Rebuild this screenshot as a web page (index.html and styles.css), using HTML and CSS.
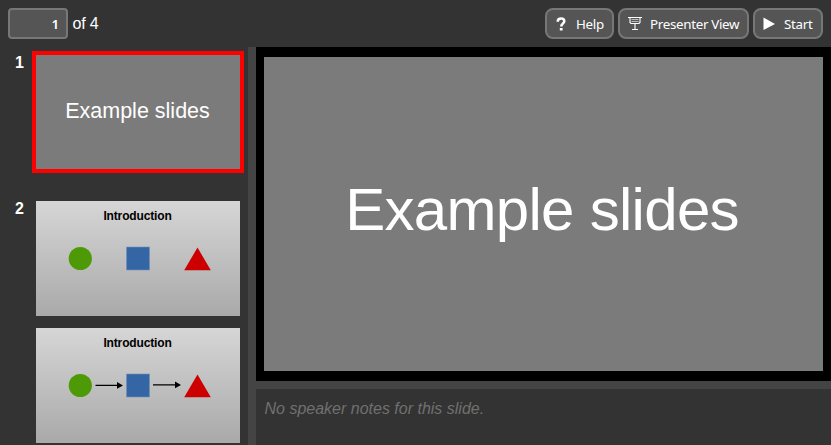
FILE: index.html
```html
<!DOCTYPE html>
<html lang="en">
<head>
<meta charset="utf-8">
<title>Slides</title>
<link rel="stylesheet" href="styles.css">
</head>
<body>
<header class="toolbar">
  <input class="page-input" type="text" value="1" aria-label="Slide">
  <span class="page-total">of 4</span>
  <div class="actions">
    <button class="btn btn-help"><svg class="icon" viewBox="0 0 16 16"><path d="M4.700 5.700C4.700 3.400 6 2.500 8.100 2.500c2.100 0 3.200 1 3.200 2.700C11.300 7.300 8.300 7.500 8.300 10.600" fill="none" stroke="#fff" stroke-width="2.500"/><path d="M6.800 12h2.800v2.500H6.800z" fill="#fff"/></svg>Help</button>
    <button class="btn btn-view"><svg class="icon" viewBox="0 0 16 16"><path d="M1 1.500h14" stroke="#fff" fill="none"/><path d="M3 2v4.500l1 1h8l1-1V2M8 7.500v6M5 13.500h6" stroke="#fff" fill="none" stroke-width="1.100"/><path d="M4.500 3.500h7M4.500 5.500h7" stroke="#bbb" fill="none"/></svg>Presenter View</button>
    <button class="btn btn-start"><svg class="icon" viewBox="0 0 16 16"><path d="M2.500 1.500L14 8 2.500 14z" fill="#fff"/></svg>Start</button>
  </div>
</header>
<main class="workspace">
  <aside class="slide-list">
    <section class="group">
      <h2 class="number">1</h2>
      <div class="thumbs"><div class="thumb title-slide selected">Example slides</div></div>
    </section>
    <section class="group">
      <h2 class="number">2</h2>
      <div class="thumbs">
        <div class="thumb content-slide">
          <h3 class="slide-heading">Introduction</h3>
          <svg class="shapes" viewBox="0 0 204 90"><circle cx="44.300" cy="32.500" r="11.600" fill="#4e9a06"/><path d="M90.500 21h23v23h-23z" fill="#3465a4" stroke="#7290b8" stroke-width=".6"/><path d="M161.500 21.500l13.300 22.800h-26.600z" fill="#c00"/></svg>
        </div>
        <div class="thumb content-slide">
          <h3 class="slide-heading">Introduction</h3>
          <svg class="shapes" viewBox="0 0 204 90"><circle cx="44.300" cy="32.500" r="11.600" fill="#4e9a06"/><path d="M90.500 21h23v23h-23z" fill="#3465a4" stroke="#7290b8" stroke-width=".6"/><path d="M161.500 21.500l13.300 22.800h-26.600z" fill="#c00"/><path d="M59.500 32.400H82M117 31.900h23" stroke="#000" stroke-width="1.200"/><path d="M81 29l6 3.400-6 3.400zM139 28.500l6 3.400-6 3.400z"/></svg>
        </div>
      </div>
    </section>
  </aside>
  <div class="detail">
    <div class="preview"><div class="preview-slide">Example slides</div></div>
    <div class="notes"><em>No speaker notes for this slide.</em></div>
  </div>
</main>
</body>
</html>
```

FILE: styles.css
```css
* { box-sizing: border-box; }
body {
  margin: 0;
  height: 100vh;
  overflow: hidden;
  display: flex;
  flex-direction: column;
  background: #444;
  color: #fff;
  font: 16px "Liberation Sans", Arial, sans-serif;
}
.toolbar {
  flex: 0 0 47px;
  display: flex;
  align-items: center;
  padding: 0 8px;
  background: #333;
}
.page-input {
  width: 60px;
  height: 31px;
  padding: 1px 7px 0 8px;
  border: 2px solid #777;
  border-radius: 4px;
  background: #555;
  color: #fff;
  font: 600 13.333px "Noto Sans", sans-serif;
  text-align: right;
}
.page-total { margin-left: 4.500px; letter-spacing: -0.200px; }
.actions { display: flex; gap: 4px; margin-left: auto; }
.btn {
  display: flex;
  align-items: center;
  height: 31px;
  padding: 0 8px;
  border: 2px solid #777;
  border-radius: 8px;
  background: #555;
  color: #fff;
  font: 13.333px "Noto Sans", sans-serif;
  letter-spacing: -0.300px;
  white-space: nowrap;
}
.btn-help { width: 69px; padding-left: 6px; }
.btn-view { width: 131px; padding-left: 7px; }
.btn-start { width: 70px; padding-left: 6px; }
.icon { flex: none; width: 16px; height: 16px; margin-right: 7px; }
.workspace { flex: 1; min-height: 0; display: flex; gap: 8px; }
.slide-list {
  flex: 0 0 248px;
  padding: 8px 8px 0 0;
  background: #333;
  overflow: hidden;
}
.group { display: flex; margin-bottom: 32px; }
.number {
  width: 36px;
  margin: -1px 0 0;
  padding-right: 12px;
  font-size: 16px;
  line-height: 18px;
  text-align: right;
}
.thumbs { display: flex; flex-direction: column; gap: 12px; }
.thumb { width: 204px; height: 115px; overflow: hidden; }
.thumb.title-slide {
  display: flex;
  align-items: center;
  justify-content: center;
  height: 114px;
  padding: 0 1px 2px 0;
  background: #7b7b7b;
  font-size: 21.500px;
}
.selected { outline: 4px solid #f00; }
.content-slide { background: linear-gradient(#d6d6d6, #a9a9a9); color: #000; }
.slide-heading {
  margin: 8px 0 0;
  padding-right: 1px;
  font-size: 12px;
  line-height: 15px;
  letter-spacing: -0.150px;
  text-align: center;
}
.shapes { display: block; width: 204px; height: 90px; margin-top: 2px; }
.detail { flex: 1; min-width: 0; display: flex; flex-direction: column; gap: 8px; }
.preview { flex: 0 0 334px; padding: 10px 8px; background: #000; }
.preview-slide {
  height: 314px;
  display: flex;
  align-items: center;
  justify-content: center;
  padding: 0 3px 9px 0;
  background: #7b7b7b;
  font-size: 60px;
  letter-spacing: -0.700px;
}
.notes { flex: 1; padding: 11px 8.500px; background: #333; color: #707070; }
```
